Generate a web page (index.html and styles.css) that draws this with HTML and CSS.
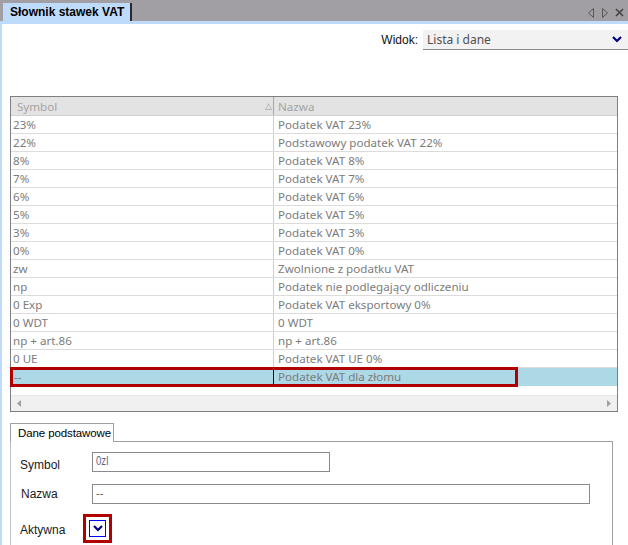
FILE: index.html
```html
<!DOCTYPE html>
<html lang="pl">
<head>
<meta charset="utf-8">
<link rel="stylesheet" href="styles.css">
</head>
<body>
<div class="window">
  <div class="titlebar">
    <div class="doc-tab">Słownik stawek VAT</div>
    <div class="title-icons">
      <svg width="8" height="10" viewBox="0 0 8 10"><path d="M6.5 0.5 L1.5 5 L6.5 9.5 Z" fill="none" stroke="#555" stroke-width="1"/></svg>
      <svg width="8" height="10" viewBox="0 0 8 10"><path d="M1.5 0.5 L6.5 5 L1.5 9.5 Z" fill="none" stroke="#555" stroke-width="1"/></svg>
      <svg width="9" height="9" viewBox="0 0 9 9"><path d="M1 1 L8 8 M8 1 L1 8" stroke="#444" stroke-width="1.6"/></svg>
    </div>
  </div>
  <div class="content">
    <div class="toolbar">
      <span class="widok-label">Widok:</span>
      <div class="combo">
        <span class="combo-text">Lista i dane</span>
        <svg class="combo-arrow" width="10" height="7" viewBox="0 0 10 7"><path d="M1 1 L5 5 L9 1" fill="none" stroke="#000080" stroke-width="2.2"/></svg>
      </div>
    </div>

    <div class="grid">
      <div class="grid-head">
        <div class="hcell c1">Symbol<span class="sort">&#9651;</span></div>
        <div class="hcell c2">Nazwa</div>
      </div>
      <div class="grid-body">
        <div class="row"><div class="cell c1">23%</div><div class="cell c2">Podatek VAT 23%</div></div>
        <div class="row"><div class="cell c1">22%</div><div class="cell c2">Podstawowy podatek VAT 22%</div></div>
        <div class="row"><div class="cell c1">8%</div><div class="cell c2">Podatek VAT 8%</div></div>
        <div class="row"><div class="cell c1">7%</div><div class="cell c2">Podatek VAT 7%</div></div>
        <div class="row"><div class="cell c1">6%</div><div class="cell c2">Podatek VAT 6%</div></div>
        <div class="row"><div class="cell c1">5%</div><div class="cell c2">Podatek VAT 5%</div></div>
        <div class="row"><div class="cell c1">3%</div><div class="cell c2">Podatek VAT 3%</div></div>
        <div class="row"><div class="cell c1">0%</div><div class="cell c2">Podatek VAT 0%</div></div>
        <div class="row"><div class="cell c1">zw</div><div class="cell c2">Zwolnione z podatku VAT</div></div>
        <div class="row"><div class="cell c1">np</div><div class="cell c2">Podatek nie podlegający odliczeniu</div></div>
        <div class="row"><div class="cell c1">0 Exp</div><div class="cell c2">Podatek VAT eksportowy 0%</div></div>
        <div class="row"><div class="cell c1">0 WDT</div><div class="cell c2">0 WDT</div></div>
        <div class="row"><div class="cell c1">np + art.86</div><div class="cell c2">np + art.86</div></div>
        <div class="row"><div class="cell c1">0 UE</div><div class="cell c2">Podatek VAT UE 0%</div></div>
        <div class="row selected"><div class="cell c1 focus">--</div><div class="cell c2">Podatek VAT dla złomu</div><div class="highlight"></div></div>
      </div>
      <div class="hscroll">
        <svg width="4" height="7" viewBox="0 0 4 7"><path d="M4 0 L0 3.5 L4 7 Z" fill="#a0a0a0"/></svg>
        <svg width="4" height="7" viewBox="0 0 4 7"><path d="M0 0 L4 3.5 L0 7 Z" fill="#a0a0a0"/></svg>
      </div>
    </div>

    <div class="details">
      <div class="tabs">
        <div class="tab">Dane podstawowe</div>
        <div class="tab-fill"></div>
      </div>
      <div class="panel">
        <div class="field f-symbol">
          <span class="label">Symbol</span>
          <div class="input short"><span class="narrow">0zl</span></div>
        </div>
        <div class="field f-nazwa">
          <span class="label">Nazwa</span>
          <div class="input long">--</div>
        </div>
        <div class="field f-aktywna">
          <span class="label">Aktywna</span>
          <div class="check-frame">
            <div class="check">
              <svg width="10" height="7" viewBox="0 0 10 7"><path d="M1 1 L5 5 L9 1" fill="none" stroke="#000080" stroke-width="2.2"/></svg>
            </div>
          </div>
        </div>
      </div>
    </div>
  </div>
</div>
</body>
</html>
```

FILE: styles.css
```css
html, body {
  margin: 0;
  padding: 0;
  background: #ffffff;
}
body {
  width: 628px;
  height: 545px;
  overflow: hidden;
  font-family: "Liberation Sans", Arial, sans-serif;
  font-size: 12px;
}
.window {
  width: 628px;
  height: 545px;
  display: flex;
  flex-direction: column;
}
.titlebar {
  height: 21px;
  background: #a19fa3;
  display: flex;
  align-items: flex-end;
  padding-left: 3px;
  flex-shrink: 0;
}
.doc-tab {
  height: 18px;
  line-height: 18px;
  background: #bfdbfb;
  padding: 0 6px 0 7px;
  font-weight: bold;
  color: #000;
  border-right: 2px solid #2a2a2a;
  font-size: 12px;
}
.title-icons {
  margin-left: auto;
  display: flex;
  align-items: center;
  gap: 6px;
  height: 21px;
  padding-right: 4px;
  padding-top: 4px;
  box-sizing: border-box;
}
.content {
  flex: 1;
  border-top: 3px solid #bfdbfb;
  border-left: 2px solid #bfdbfb;
  display: flex;
  flex-direction: column;
  min-height: 0;
}
.toolbar {
  display: flex;
  justify-content: flex-end;
  align-items: center;
  margin-top: 6px;
  height: 20px;
  flex-shrink: 0;
}
.widok-label {
  font-family: "Liberation Sans", Arial, sans-serif;
  color: #111;
  margin-right: 5px;
}
.combo {
  width: 205px;
  height: 20px;
  background: #f2f2f2;
  border-bottom: 1px solid #8a8a8a;
  box-sizing: border-box;
  display: flex;
  align-items: center;
  padding-left: 4px;
}
.combo-text {
  font-family: "Noto Sans", sans-serif;
  font-size: 12px;
  color: #505050;
}
.combo-arrow {
  margin-left: auto;
  margin-right: 6px;
}
.grid {
  margin-top: 46px;
  margin-left: 8px;
  width: 608px;
  height: 316px;
  flex-shrink: 0;
  border: 1px solid #7f7f7f;
  box-sizing: border-box;
  display: flex;
  flex-direction: column;
  font-family: "Noto Sans", sans-serif;
  font-size: 11.6px;
}
.grid-head {
  display: flex;
  height: 19px;
  background: #e3e3e3;
  border-bottom: 1px solid #d0d0d0;
  box-sizing: border-box;
}
.hcell {
  color: #a4a4a4;
  line-height: 19px;
  padding-left: 6px;
  box-sizing: border-box;
}
.hcell.c1 {
  width: 263px;
  border-right: 1px solid #a8a8a8;
  position: relative;
}
.hcell.c2 {
  padding-left: 4px;
}
.sort {
  position: absolute;
  right: 1px;
  top: -1px;
  font-size: 9px;
  color: #9a9a9a;
}
.grid-body {
  flex: 1;
}
.row {
  display: flex;
  height: 18px;
  border-bottom: 1px solid #dcdcdc;
  box-sizing: border-box;
  position: relative;
}
.cell {
  color: #7c7c7c;
  line-height: 17px;
  padding-left: 4px;
  box-sizing: border-box;
  white-space: nowrap;
}
.cell.c1 {
  width: 263px;
  border-right: 1px solid #d0d0d0;
  padding-left: 2px;
}
.row.selected {
  background: #add8e6;
  border-bottom: none;
}
.cell.focus {
  border: 1px solid #00007a;
  margin-left: 1px;
  width: 262px;
  line-height: 15px;
  padding-left: 1px;
}
.highlight {
  position: absolute;
  left: -1px;
  top: -1px;
  width: 508px;
  height: 20px;
  border: 3px solid #b00000;
  box-sizing: border-box;
  pointer-events: none;
}
.hscroll {
  height: 16px;
  background: #f0f0f0;
  border-top: 1px solid #e8e8e8;
  display: flex;
  justify-content: space-between;
  align-items: center;
  padding: 0 6px;
  box-sizing: border-box;
}
.details {
  margin-top: 11px;
  margin-left: 8px;
  display: flex;
  flex-direction: column;
  flex: 1;
}
.tabs {
  display: flex;
  align-items: flex-end;
  height: 19px;
  flex-shrink: 0;
}
.tab {
  height: 19px;
  line-height: 18px;
  padding: 0 0 0 7px;
  border: 1px solid #a0a0a0;
  border-bottom: none;
  background: #fff;
  box-sizing: border-box;
  color: #000;
  width: 104px;
  white-space: nowrap;
  font-size: 11.5px;
  letter-spacing: -0.1px;
  flex-shrink: 0;
}
.tab-fill {
  width: 499px;
  border-bottom: 1px solid #a0a0a0;
}
.panel {
  width: 603px;
  flex: 1;
  border-right: 1px solid #a0a0a0;
  border-left: 1px solid #c0c0c0;
  box-sizing: border-box;
}
.field {
  display: flex;
  align-items: center;
}
.label {
  color: #1a1a1a;
  width: 81px;
  padding-left: 9px;
  box-sizing: border-box;
  flex-shrink: 0;
}
.f-symbol {
  margin-top: 10px;
  height: 20px;
}
.f-symbol .label {
  padding-top: 6px;
}
.f-nazwa {
  margin-top: 12px;
  height: 20px;
}
.f-nazwa .label {
  padding-left: 10px;
  padding-top: 0px;
}
.input {
  height: 20px;
  border: 1px solid #8a8a8a;
  box-sizing: border-box;
  padding-left: 3px;
  color: #555;
  font-size: 11px;
  line-height: 16px;
  flex-shrink: 0;
}
.input.short {
  width: 238px;
}
.input.long {
  width: 498px;
}
.narrow {
  display: inline-block;
  transform: scaleX(0.8);
  transform-origin: left;
  color: #5a6488;
  font-size: 12px;
  line-height: 14px;
}
.f-aktywna {
  margin-top: 10px;
}
.f-aktywna .label {
  width: 72px;
  padding-top: 3px;
}
.check-frame {
  width: 29px;
  height: 29px;
  flex-shrink: 0;
  border: 3px solid #b00000;
  box-sizing: border-box;
  display: flex;
  align-items: center;
  justify-content: center;
}
.check {
  width: 17px;
  height: 17px;
  border: 1px solid #0000ff;
  box-sizing: border-box;
  display: flex;
  align-items: center;
  justify-content: center;
  background: #fff;
}
```
